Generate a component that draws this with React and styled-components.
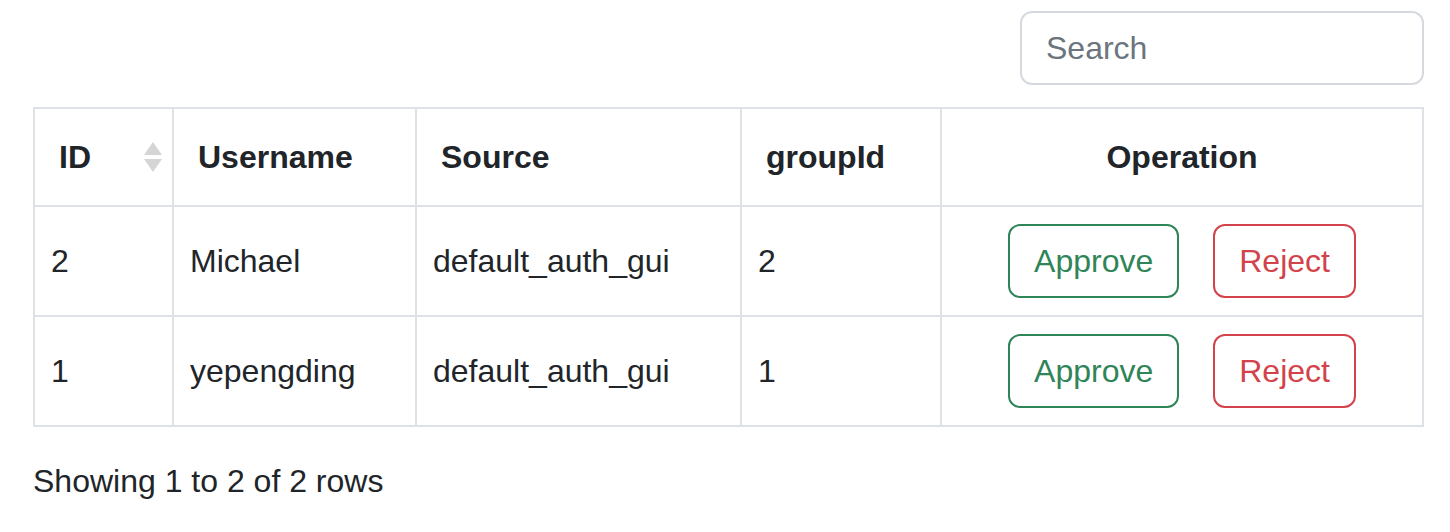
import React, { useState } from "react";
import styled, { createGlobalStyle } from "styled-components";

const GlobalStyle = createGlobalStyle`
  body {
    margin: 0;
    background: #fff;
    color: #212529;
    font-family: "Liberation Sans", Arial, sans-serif;
  }
`;

const Page = styled.div`
  width: 1391px;
  padding: 11px 0 0 33px;
`;

const Toolbar = styled.div`
  display: flex;
  justify-content: flex-end;
  margin-bottom: 22px;
`;

const SearchInput = styled.input`
  box-sizing: border-box;
  width: 404px;
  height: 74px;
  padding: 0 24px;
  border: 2px solid #d6dadf;
  border-radius: 12px;
  font-family: inherit;
  font-size: 32px;
  color: #212529;
  outline: none;

  &::placeholder {
    color: #6c757d;
  }
`;

const Table = styled.table`
  width: 100%;
  border-collapse: collapse;
  table-layout: fixed;
  border: 2px solid #dee2e6;
`;

const Th = styled.th`
  height: 96px;
  padding: 0 ${(p) => (p.$sortable ? "10px" : "24px")} 0 24px;
  border: 2px solid #dee2e6;
  font-size: 32px;
  font-weight: 700;
  text-align: ${(p) => (p.$center ? "center" : "left")};
  vertical-align: middle;
`;

const HeadInner = styled.div`
  display: flex;
  align-items: center;
  justify-content: space-between;
`;

const Td = styled.td`
  height: 108px;
  padding: 0 16px;
  border: 2px solid #dee2e6;
  font-size: 32px;
  text-align: ${(p) => (p.$center ? "center" : "left")};
  vertical-align: middle;
`;

const Actions = styled.div`
  display: flex;
  justify-content: center;
  gap: 34px;
`;

const OutlineButton = styled.button`
  box-sizing: border-box;
  height: 74px;
  padding: 0 24px;
  background: #fff;
  border: 2px solid ${(p) => p.$color};
  border-radius: 12px;
  color: ${(p) => p.$color};
  font-family: inherit;
  font-size: 32px;
  cursor: pointer;
`;

const Footer = styled.div`
  margin-top: 30px;
  font-size: 32px;
  line-height: 48px;
`;

const SortIcon = () => (
  <svg width="18" height="30" viewBox="0 0 18 30">
    <polygon points="9,0 18,13 0,13" fill="#d5d5d5" />
    <polygon points="0,17 18,17 9,30" fill="#d5d5d5" />
  </svg>
);

const rows = [
  { id: 2, username: "Michael", source: "default_auth_gui", groupId: 2 },
  { id: 1, username: "yepengding", source: "default_auth_gui", groupId: 1 },
];

export default function App() {
  const [query, setQuery] = useState("");
  const filtered = rows.filter((r) =>
    r.username.toLowerCase().includes(query.toLowerCase())
  );

  return (
    <Page>
      <GlobalStyle />
      <Toolbar>
        <SearchInput
          placeholder="Search"
          value={query}
          onChange={(e) => setQuery(e.target.value)}
        />
      </Toolbar>
      <Table>
        <colgroup>
          <col style={{ width: 139 }} />
          <col style={{ width: 243 }} />
          <col style={{ width: 325 }} />
          <col style={{ width: 200 }} />
          <col />
        </colgroup>
        <thead>
          <tr>
            <Th $sortable>
              <HeadInner>
                ID
                <SortIcon />
              </HeadInner>
            </Th>
            <Th>Username</Th>
            <Th>Source</Th>
            <Th>groupId</Th>
            <Th $center>Operation</Th>
          </tr>
        </thead>
        <tbody>
          {filtered.map((r) => (
            <tr key={r.id}>
              <Td>{r.id}</Td>
              <Td>{r.username}</Td>
              <Td>{r.source}</Td>
              <Td>{r.groupId}</Td>
              <Td $center>
                <Actions>
                  <OutlineButton $color="#2f8558">Approve</OutlineButton>
                  <OutlineButton $color="#d2434b">Reject</OutlineButton>
                </Actions>
              </Td>
            </tr>
          ))}
        </tbody>
      </Table>
      <Footer>
        Showing 1 to {filtered.length} of {filtered.length} rows
      </Footer>
    </Page>
  );
}
